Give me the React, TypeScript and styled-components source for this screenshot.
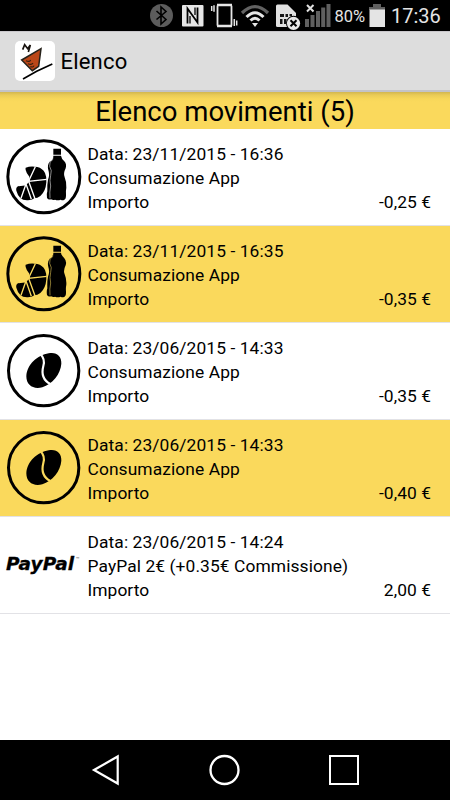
import React from 'react';
import styled, { createGlobalStyle } from 'styled-components';

const GlobalStyle = createGlobalStyle`
  * { box-sizing: border-box; }
  body { margin: 0; background: #fff; color: #000; font-family: Roboto, sans-serif; }
  svg { display: block; flex: none; }
`;
const Screen = styled.div`
  width: 450px; height: 800px; display: flex; flex-direction: column; background: #fff; overflow: hidden;
`;
const StatusBar = styled.header`
  height: 31px; flex: none; background: #000; color: #e4e4e4; display: flex; padding-left: 148px;
`;
const StatusText = styled.span<{ $size: number; $width: number; $left: number }>`
  font-size: ${p => p.$size}px; width: ${p => p.$width}px; margin-left: ${p => p.$left}px;
  line-height: 33px; white-space: nowrap;
`;
const AppBar = styled.div`
  height: 61px; flex: none; background: #ddd; border-top: 1px solid #c9c7cb; border-bottom: 2px solid #c3c3c8;
  display: flex; align-items: center; padding: 0 0 0 15px; gap: 5.5px;
`;
const AppIcon = styled.div`
  width: 40px; height: 40px; border-radius: 5px; background: #fff;
`;
const AppTitle = styled.h1`
  margin: 0; font-size: 22px; font-weight: 400; line-height: 42px; letter-spacing: 0.2px; padding-top: 1px;
`;
const Heading = styled.h2`
  margin: 0; height: 37px; flex: none; text-align: center; font-size: 27.5px; font-weight: 400; line-height: 39px;
  background: linear-gradient(#d2b650 0, #e9cb57 3px, #f7d75a 7px, #fad95c 10px);
`;
const List = styled.main`flex: 1;`;
const Row = styled.section<{ $tinted: boolean }>`
  height: 97px; display: flex; background: ${p => (p.$tinted ? '#fad95c' : '#fff')};
  border-bottom: 1px solid #e2e2e6;
`;
const Media = styled.div`
  width: 87.5px; height: 97px; flex: none;
`;
const Details = styled.div`
  flex: 1; padding: 14px 19px 0 0; font-size: 17.4px; line-height: 23.8px; white-space: nowrap;
`;
const DateLine = styled.div`letter-spacing: 0.09px;`;
const Amount = styled.div`display: flex; justify-content: space-between; letter-spacing: 0.05px;`;
const PayPal = styled.div`
  display: flex; align-items: flex-start; padding: 33px 0 0 6px;
`;
const Wordmark = styled.span`
  font: italic 700 18.5px/27px "DejaVu Sans", sans-serif; width: 70px; letter-spacing: 0.1px;
  -webkit-text-stroke: 0.3px #000;
`;
const Mark = styled.span`font-size: 6px; line-height: 6px; margin-top: 6px; color: #555;`;
const NavBar = styled.nav`
  height: 60px; flex: none; background: #000; display: flex; align-items: center; justify-content: space-between;
  padding: 0 91px 0 91px;
`;

const StatusIcons = () => (
  <>
    <svg width="28" height="31" viewBox="0 0 28 31">
      <circle cx="13.5" cy="15.5" r="11.5" fill="#5c5c5c" />
      <path d="M8.5 11l9.5 8.5-5 4.5V7l5 4.5-9.5 8" fill="none" stroke="#000" strokeWidth="1.6" />
    </svg>
    <svg width="32" height="31" viewBox="0 0 32 31">
      <rect x="6" y="5" width="21.5" height="21.5" rx="1" fill="#e6e6e6" />
      <path d="M11.5 23.5V8.5L21.5 22.5V7.5" fill="none" stroke="#000" strokeWidth="1.8" />
      <path d="M14 23.5V16M19 7.5V15" fill="none" stroke="#000" strokeWidth="1.3" />
    </svg>
    <svg width="32" height="31" viewBox="0 0 32 31" fill="none" stroke="#e6e6e6">
      <rect x="9.5" y="5.2" width="14" height="20.8" rx="1" strokeWidth="1.8" />
      <path d="M9 5h15M9 26h15" strokeWidth="2.5" />
      <path d="M3.7 6v5M6 5.3v6.5M26.3 19v7M28.7 20.5v5" strokeWidth="1.5" />
    </svg>
    <svg width="32" height="31" viewBox="0 0 32 31" fill="none">
      <path d="M2 13Q15 0 28 13" stroke="#626262" strokeWidth="3.2" />
      <path d="M6.5 17Q15 8.5 23.5 17M10.5 20.5Q15 16 19.5 20.5" stroke="#e6e6e6" strokeWidth="3" />
      <path d="M12 23h6l-3 4z" fill="#e6e6e6" />
    </svg>
    <svg width="30" height="31" viewBox="0 0 30 31">
      <path d="M4 6q0-1.5 1.5-1.5h10L24 13v14H5.5Q4 27 4 25.5z" fill="#e1e1e1" />
      <path d="M8 14h4v3H8zm5.5 0h2.5v3h-2.5zm4 0h2.5v2h-2.5zM8 19h2.5v5H8zm4 0h2.5v5H12z" fill="#161616" />
      <circle cx="21.5" cy="23.3" r="7.5" fill="#000" /><circle cx="21.5" cy="23.3" r="6.6" fill="#e8e8e8" />
      <path d="M18.5 20.3l6 6m0-6l-6 6" stroke="#000" strokeWidth="2" />
    </svg>
    <svg width="30" height="31" viewBox="0 0 30 31">
      <path d="M5 5l6.5 6.5m0-6.5L5 11.5" stroke="#e1e1e1" strokeWidth="2" />
      <path d="M3 19h4v8H3zM8.5 15h4v12h-4zM14 11h4v16h-4zM19.2 7.5h4V27h-4zM24.5 4h4v23h-4z" fill="#606060" />
    </svg>
  </>
);

const Logo = () => (
  <svg width="40" height="40" viewBox="0 0 120 120">
    <path d="M23 26L29 11 38 23 46 12 40 33" fill="none" stroke="#17120d" strokeWidth="5" />
    <path d="M20 57L78 23 71 76 52 89z" fill="#bb4718" stroke="#26221a" strokeWidth="4.5" />
    <path d="M33 59q11 5 14-2M39 68q11 5 15-2M46 77q9 3 11-3" fill="none" stroke="#38200f" strokeWidth="3.5" />
    <path d="M24 114L65 91l47-22" fill="none" stroke="#000" strokeWidth="5" />
  </svg>
);

const Snack = ({ gap }: { gap: string }) => (
  <svg width="88" height="97" viewBox="0 -4 264 291">
    <circle cx="131.5" cy="139.5" r="108" fill="none" stroke="#000" strokeWidth="9" />
    {/* croissant */}
    <path d="M77 112q15-6 35-2 16 4 23 18 6 13 4 28-2 28-18 41-9 7-18 7-7 6-19 6-15 1-23-7-9-10-12-22-2-9 5-13 10-4 22-4 6-8 13-12l-1-13q-9-10-11-20-1-5 0-7z" />
    <path d="M106 109L86 152M140 147L86 153 106 208M78 161L94 207M78 161L63 204M78 163L56 166M78 162L86 152" fill="none" stroke={gap} strokeWidth="4" />
    {/* bottle */}
    <path d="M160 55h23v18h-23zM160 76h23q1 8 10 17 8 9 4 21-8 16-3 27 6 14 5 31-2 10-1 20 1 15-6 17-5 2-10-1-9 3-17 0-5 2-12-1-8 2-12-4-2-12 1-20-1-21 2-35 6-14 1-29-4-15 4-25 12-6 11-18z" />
    <path d="M160 86q-14 8-11 22 8 12 3 27-4 16 0 32-4 18-2 37" fill="none" stroke={gap} strokeOpacity=".7" strokeWidth="2.3" />
  </svg>
);
const Coffee = ({ gap }: { gap: string }) => (
  <svg width="88" height="97" viewBox="0 -6 264 291">
    <circle cx="131" cy="137" r="105.5" fill="none" stroke="#000" strokeWidth="9" />
    <path d="M146 85c24-5 39 9 38 31-2 31-27 61-57 71-27 7-48-6-48-33 1-35 34-64 67-69z" />
    <path d="M121 87q15 15 9 36-10 38 21 54" fill="none" stroke={gap} strokeWidth="6.5" />
  </svg>
);

type Movement = { kind: 'snack' | 'coffee' | 'paypal'; date: string; label: string; amount: string };
const movements: Movement[] = [
  { kind: 'snack', date: '23/11/2015 - 16:36', label: 'Consumazione App', amount: '-0,25 €' },
  { kind: 'snack', date: '23/11/2015 - 16:35', label: 'Consumazione App', amount: '-0,35 €' },
  { kind: 'coffee', date: '23/06/2015 - 14:33', label: 'Consumazione App', amount: '-0,35 €' },
  { kind: 'coffee', date: '23/06/2015 - 14:33', label: 'Consumazione App', amount: '-0,40 €' },
  { kind: 'paypal', date: '23/06/2015 - 14:24', label: 'PayPal 2€ (+0.35€ Commissione)', amount: '2,00 €' },
];

export default function App() {
  return (
    <Screen>
      <GlobalStyle />
      <StatusBar>
        <StatusIcons />
        <StatusText $size={16.5} $width={32} $left={2.5}>80%</StatusText>
        <svg width="20" height="31" viewBox="0 0 20 31">
          <path d="M6 4h8v3h4v3H2V7h4z" fill="#606060" /><path d="M2.5 9.5H18V27H2.5z" fill="#e4e4e4" />
        </svg>
        <StatusText $size={20} $width={52} $left={4.5}>17:36</StatusText>
      </StatusBar>
      <AppBar><AppIcon><Logo /></AppIcon><AppTitle>Elenco</AppTitle></AppBar>
      <Heading>Elenco movimenti (5)</Heading>
      <List>
        {movements.map((m, i) => {
          const gap = i % 2 ? '#fad95c' : '#fff';
          return (
            <Row key={i} $tinted={i % 2 === 1}>
              <Media>
                {m.kind === 'snack' && <Snack gap={gap} />}
                {m.kind === 'coffee' && <Coffee gap={gap} />}
                {m.kind === 'paypal' && <PayPal><Wordmark>PayPal</Wordmark><Mark>™</Mark></PayPal>}
              </Media>
              <Details>
                <DateLine>Data: {m.date}</DateLine>
                <DateLine>{m.label}</DateLine>
                <Amount><span>Importo</span><span>{m.amount}</span></Amount>
              </Details>
            </Row>
          );
        })}
      </List>
      <NavBar>
        <svg width="32" height="32" viewBox="0 0 32 32"><path d="M3 16L26.7 2.5v27z" fill="none" stroke="#fff" strokeWidth="2.2" /></svg>
        <svg width="32" height="32" viewBox="0 0 32 32"><circle cx="15.5" cy="16" r="14" fill="none" stroke="#fff" strokeWidth="2.3" /></svg>
        <svg width="32" height="32" viewBox="0 0 32 32"><path d="M3 2h28v28H3z" fill="none" stroke="#fff" strokeWidth="2" /></svg>
      </NavBar>
    </Screen>
  );
}
